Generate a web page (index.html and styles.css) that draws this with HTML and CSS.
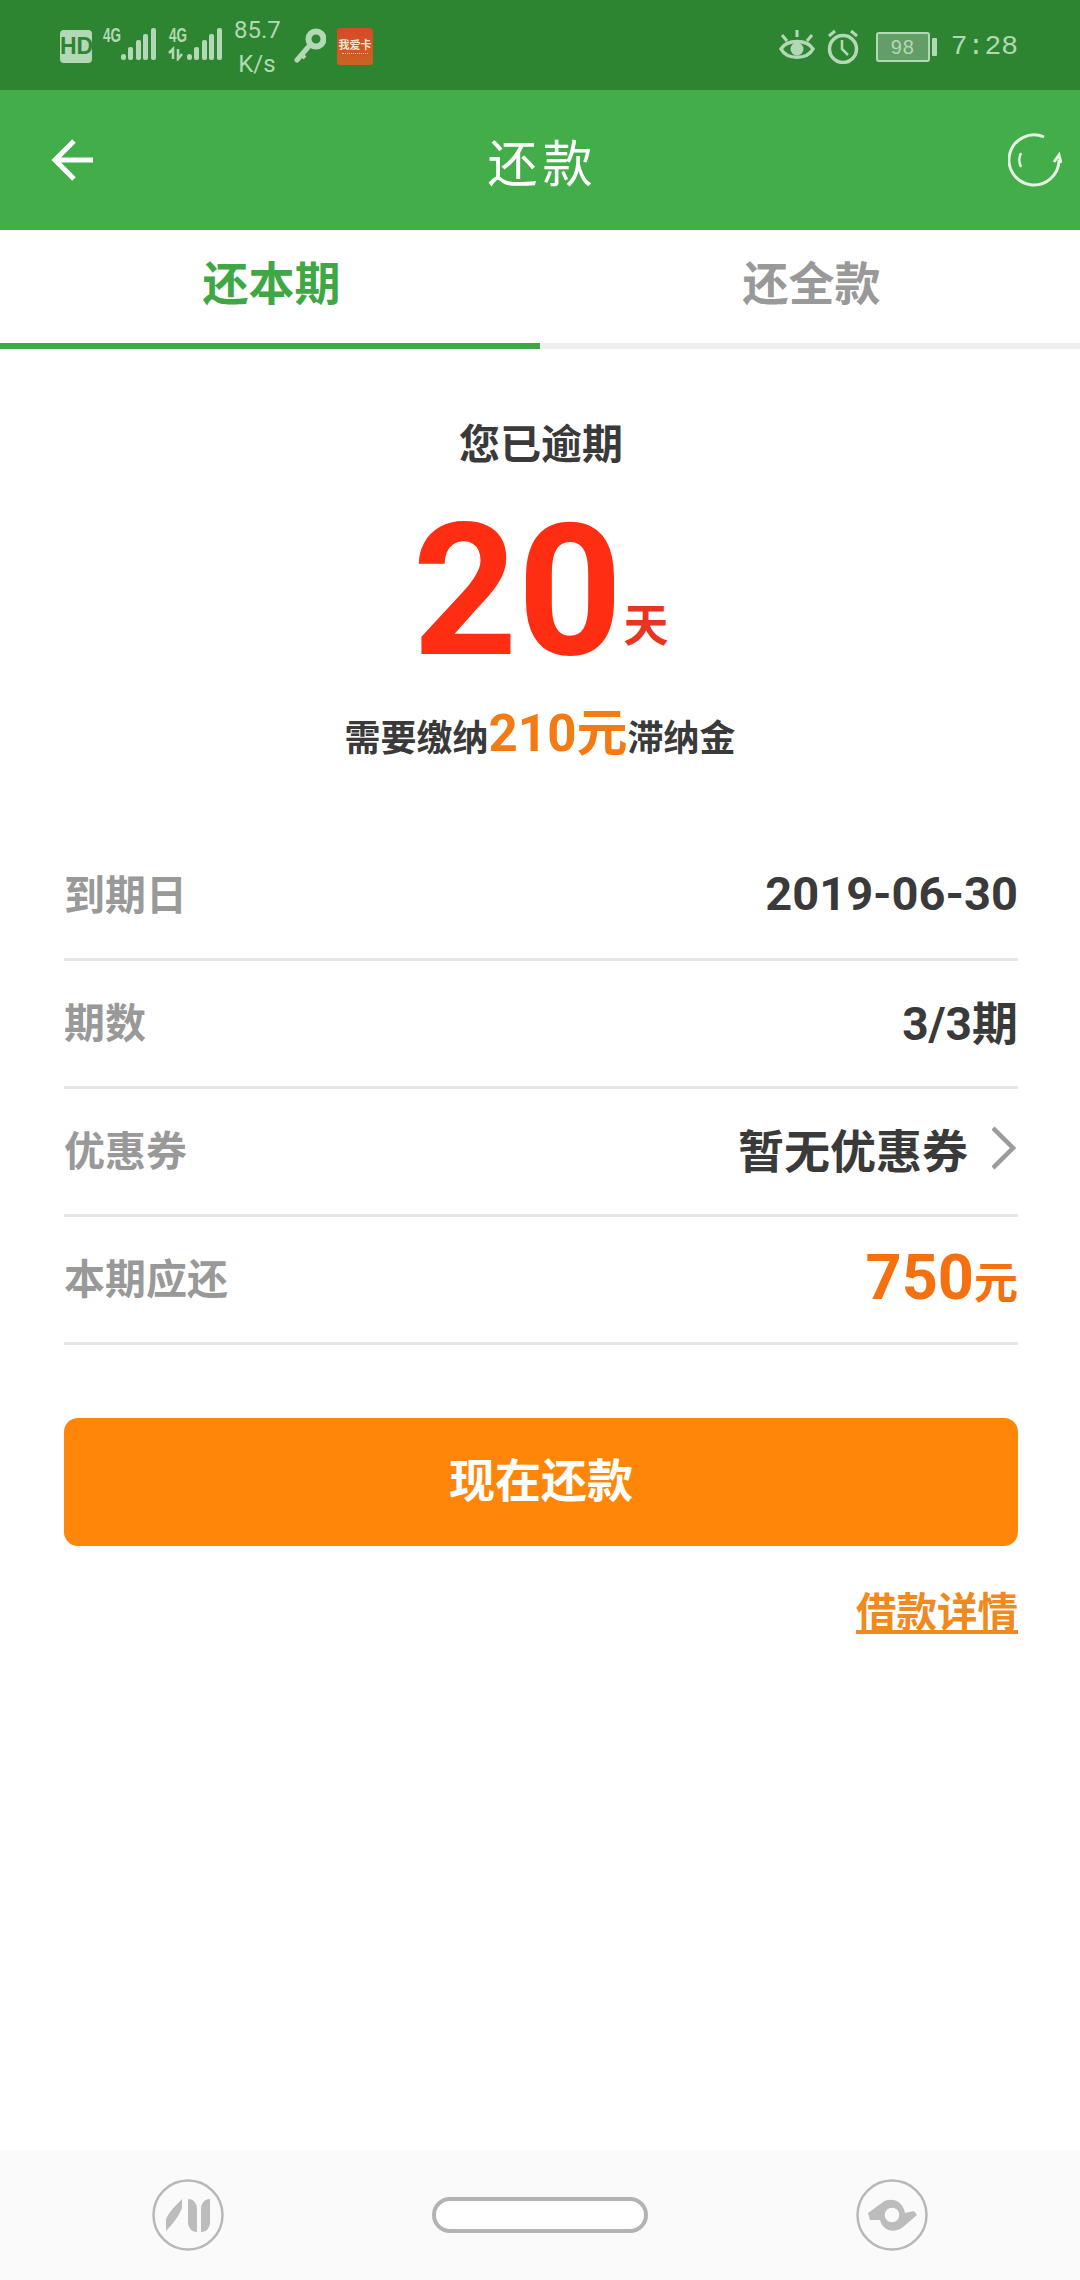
FILE: index.html
```html
<!DOCTYPE html>
<html lang="zh-CN">
    <head>
        <meta charset="utf-8">
        <title>还款</title>
        <link rel="stylesheet" href="styles.css">
    </head>

    <body>
        <div class="page">
            <div class="status">
                <div class="status-side">
                    <span class="hd">HD</span>
                    <svg class="signal" width="54" height="38" viewBox="0 -4 54 38" fill="#b3d8b5">
                        <text x="1" y="15" class="net" textLength="18" lengthAdjust="spacingAndGlyphs">4G</text>
                        <rect x="19" y="27" width="5" height="6" rx="2.5"/>
                        <rect x="26" y="20" width="5" height="13" rx="2"/>
                        <rect x="34" y="13" width="5" height="20" rx="2"/>
                        <rect x="41" y="7" width="5" height="26" rx="2"/>
                        <rect x="49" y="1" width="5" height="32" rx="2"/>
                    </svg>
                    <svg class="signal" width="54" height="38" viewBox="0 -4 54 38" fill="#b3d8b5">
                        <text x="1" y="15" class="net" textLength="18" lengthAdjust="spacingAndGlyphs">4G</text>
                        <path d="M5 32V22L1 26M10 22V32L14 27" fill="none" stroke="#b3d8b5" stroke-width="2.5"/>
                        <rect x="19" y="27" width="5" height="6" rx="2.5"/>
                        <rect x="26" y="20" width="5" height="13" rx="2"/>
                        <rect x="34" y="13" width="5" height="20" rx="2"/>
                        <rect x="41" y="7" width="5" height="26" rx="2"/>
                        <rect x="49" y="1" width="5" height="32" rx="2"/>
                    </svg>
                    <div class="speed">85.7<br>K/s</div>
                    <svg class="key" width="32" height="36" viewBox="0 0 32 36" fill="none" stroke="#b3d8b5">
                        <circle cx="22" cy="11" r="7.5" stroke-width="6"/>
                        <path d="M16 17L3 32" stroke-width="5" stroke-linecap="round"/>
                        <path d="M8 27l3 3" stroke-width="4"/>
                    </svg>
                    <div class="app-icon">
                        <div class="app-name">我爱卡</div>
                        <div class="app-sub"></div>
                    </div>
                </div>
                <div class="status-side">
                    <svg class="eye" width="36" height="34" viewBox="0 0 36 34" fill="none" stroke="#b3d8b5" stroke-width="3.5">
                        <path d="M2 20C8 10 28 10 34 20C28 31 8 31 2 20Z"/>
                        <circle cx="18" cy="20" r="6.5" fill="#b3d8b5" stroke="none"/>
                        <path d="M18 1v7M3 6l5 6M33 6l-5 6" stroke-width="3"/>
                    </svg>
                    <svg class="alarm" width="32" height="36" viewBox="0 0 32 36" fill="none" stroke="#b3d8b5" stroke-width="3.5">
                        <circle cx="16" cy="21" r="13.5"/>
                        <path d="M15 12v9l6 6" stroke-width="2.5"/>
                        <path d="M2 8l6-5M30 8l-6-5" stroke-width="3"/>
                    </svg>
                    <div class="battery">
                        <div class="battery-body">98</div>
                        <div class="battery-tip"></div>
                    </div>
                    <div class="time">7:28</div>
                </div>
            </div>

            <div class="appbar">
                <svg class="back" width="42" height="44" viewBox="0 0 42 44" fill="none" stroke="#fff" stroke-width="5">
                    <path d="M42 22H4M23 3L4 22l19 19"/>
                </svg>
                <div class="title">还款</div>
                <svg class="refresh" width="54" height="54" viewBox="0 0 54 54" fill="none" stroke="#e3f3e4" stroke-width="3">
                    <path d="M36 4A25 25 0 1 0 51 27"/>
                    <path d="M46 29l5-7 2 8" stroke-width="3"/>
                    <path d="M13 20A16 16 0 0 0 13 34" stroke-width="2.5"/>
                </svg>
            </div>

            <div class="tabs">
                <div class="tab active">还本期</div>
                <div class="tab">还全款</div>
            </div>

            <div class="hero">
                <div class="hero-label">您已逾期</div>
                <div class="days"><span class="days-num">20</span><span class="days-unit">天</span></div>
                <div class="fee">需要缴纳<span class="fee-num">210元</span>滞纳金</div>
            </div>

            <div class="rows">
                <div class="row">
                    <span class="row-label">到期日</span>
                    <span class="row-value date">2019-06-30</span>
                </div>
                <div class="row">
                    <span class="row-label">期数</span>
                    <span class="row-value">3/3期</span>
                </div>
                <div class="row">
                    <span class="row-label">优惠券</span>
                    <span class="row-value coupon">暂无优惠券
                        <svg class="chevron" width="24" height="44" viewBox="0 0 24 44" fill="none" stroke="#9c9c9c" stroke-width="4.5">
                            <path d="M1 2l20 20L1 42"/>
                        </svg>
                    </span>
                </div>
                <div class="row">
                    <span class="row-label">本期应还</span>
                    <span class="row-value total">750<small>元</small></span>
                </div>
            </div>

            <div class="actions">
                <button class="pay">现在还款</button>
                <a class="detail">借款详情</a>
            </div>

            <div class="navbar">
                <svg width="72" height="72" viewBox="0 0 72 72" fill="#bcbcbc">
                    <circle cx="36" cy="36" r="34.5" fill="none" stroke="#b8b8b8" stroke-width="2.5"/>
                    <path d="M30 20V29C27 37 20 46 14 52V41C15 35 24 26 30 20Z"/>
                    <path d="M36 20C42 20 45 25 45 30V53C39 53 36 48 36 43Z"/>
                    <path d="M58 20C52 20 49 25 49 30V53C55 53 58 48 58 43Z"/>
                </svg>
                <div class="home-pill"></div>
                <svg width="72" height="72" viewBox="0 0 72 72" fill="#bcbcbc">
                    <circle cx="36" cy="36" r="34.5" fill="none" stroke="#b8b8b8" stroke-width="2.5"/>
                    <path fill-rule="evenodd" d="M12 34L27 23C33 19 46 19 49 34L58 32L61 36L47 48C38 55 27 52 24 41L14 41ZM43.3 36A7.3 7.3 0 1 0 28.7 36A7.3 7.3 0 1 0 43.3 36Z"/>
                </svg>
            </div>
        </div>
    </body>
</html>
```

FILE: styles.css
```css
html, body {
    margin: 0;
    background: #fff;
}

.page {
    display: flex;
    flex-direction: column;
    width: 1080px;
    height: 2280px;
    font-family: Roboto, "Noto Sans CJK SC", sans-serif;
    color: #3a3a3a;
    overflow: hidden;
}

/* status bar */
.status {
    display: flex;
    flex: none;
    align-items: center;
    justify-content: space-between;
    box-sizing: border-box;
    height: 90px;
    padding: 2px 62px 0 60px;
    background: #2e8531;
    color: #b3d8b5;
}

.status-side {
    display: flex;
    align-items: center;
}

.hd {
    width: 32px;
    height: 33px;
    margin-right: 10px;
    border-radius: 4px;
    background: #b3d8b5;
    color: #2e8531;
    font: bold 23px/33px "Liberation Sans", sans-serif;
    text-align: center;
}

.signal {margin: 0 12px 8px 0}

.net {
    font: bold 20px "Liberation Sans", sans-serif;
}

.speed {
    width: 46px;
    margin: 2px 14px 0 0;
    font: 24px/34px Roboto, sans-serif;
    text-align: center;
    white-space: nowrap;
}

.key {margin-right: 11px}

.app-icon {
    display: flex;
    flex-direction: column;
    align-items: center;
    justify-content: center;
    width: 36px;
    height: 37px;
    border-radius: 3px;
    background: linear-gradient(#d9482a, #c8641f);
}

.app-name {
    color: #f6e2d0;
    font: bold 11px/13px "Noto Sans CJK SC", sans-serif;
    white-space: nowrap;
}

.app-sub {
    width: 26px;
    margin-top: 2px;
    border-top: 1px dotted #eec3a0;
}

.eye {margin-right: 12px}
.alarm {margin-right: 17px}

.battery {
    display: flex;
    align-items: center;
    margin: 2px 14px 0 0;
}

.battery-body {
    width: 50px;
    height: 26px;
    border: 2px solid #b3d8b5;
    border-radius: 3px;
    background: #649e67;
    background-clip: padding-box;
    font: 20px/26px "Liberation Sans", sans-serif;
    letter-spacing: 1px;
    text-align: center;
}

.battery-tip {
    width: 5px;
    height: 18px;
    margin-left: 2px;
    border-radius: 1px;
    background: #b3d8b5;
}

.time {
    margin-top: 2px;
    font: 28px/34px "Liberation Mono", monospace;
    white-space: nowrap;
}

/* app bar */
.appbar {
    display: grid;
    flex: none;
    grid-template-columns: 1fr auto 1fr;
    align-items: center;
    height: 140px;
    padding: 0 18px 0 51px;
    background: #43ad49;
}

.back {justify-self: start}
.refresh {justify-self: end}

.title {
    margin-right: 28px;
    color: #fff;
    font-size: 50px;
    font-weight: 400;
    letter-spacing: 5px;
}

/* tabs */
.tabs {
    display: flex;
    flex: none;
    height: 119px;
}

.tab {
    flex: 1;
    box-sizing: border-box;
    padding: 0 0 2px 3px;
    border-bottom: 6px solid #eee;
    color: #999;
    font-size: 46px;
    font-weight: bold;
    line-height: 108px;
    text-align: center;
}

.tab.active {
    border-color: #3fa845;
    color: #3fa845;
}

/* overdue block */
.hero {
    display: flex;
    flex: none;
    flex-direction: column;
    align-items: center;
    box-sizing: border-box;
    height: 484px;
    padding-top: 71px;
}

.hero-label {
    padding-left: 2px;
    font-size: 41px;
    font-weight: bold;
    line-height: 50px;
}

.days {
    height: 184px;
    margin-top: 30px;
    padding-left: 1px;
    color: #ff2d12;
    line-height: 184px;
}

.days-num {
    font-size: 183px;
    font-weight: bold;
}

.days-unit {
    margin-left: 1px;
    color: #e83420;
    font-size: 45px;
    font-weight: bold;
    vertical-align: 12px;
}

.fee {
    margin-top: 18px;
    font-size: 36px;
    font-weight: bold;
    line-height: 64px;
    white-space: nowrap;
}

.fee-num {
    color: #f47a14;
    font-size: 51px;
}

/* detail rows */
.rows {
    flex: none;
    padding: 0 62px 0 64px;
}

.row {
    display: flex;
    align-items: center;
    justify-content: space-between;
    box-sizing: border-box;
    height: 128px;
    padding-bottom: 8px;
    border-bottom: 3px solid #e6e6e6;
}

.row-label {
    color: #999;
    font-size: 41px;
    font-weight: bold;
}

.row-value {
    font-size: 46px;
    font-weight: bold;
}

.date {
    padding-top: 4px;
    font-size: 47px;
}

.coupon {
    display: flex;
    align-items: center;
    gap: 24px;
}

.chevron {margin-right: 2px}

.total {
    padding-top: 4px;
    color: #f5700f;
    font-size: 63px;
}

.total small {font-size: 44px}

/* actions */
.actions {
    display: flex;
    flex: none;
    flex-direction: column;
    align-items: flex-end;
    padding: 73px 62px 0 64px;
}

.pay {
    width: 100%;
    height: 128px;
    padding-bottom: 12px;
    border: none;
    border-radius: 14px;
    background: #ff8609;
    color: #fff;
    font-family: inherit;
    font-size: 46px;
    font-weight: bold;
}

.detail {
    margin-top: 37px;
    color: #f08a1e;
    font-size: 40.5px;
    font-weight: bold;
    line-height: 60px;
    text-decoration: underline;
}

/* navigation bar */
.navbar {
    display: flex;
    flex: none;
    align-items: center;
    justify-content: space-between;
    box-sizing: border-box;
    height: 130px;
    margin-top: auto;
    padding: 0 152px;
    background: #fafafa;
}

.home-pill {
    box-sizing: border-box;
    width: 216px;
    height: 36px;
    border: 4px solid #b3b3b3;
    border-radius: 18px;
    background: #fff;
}
```
